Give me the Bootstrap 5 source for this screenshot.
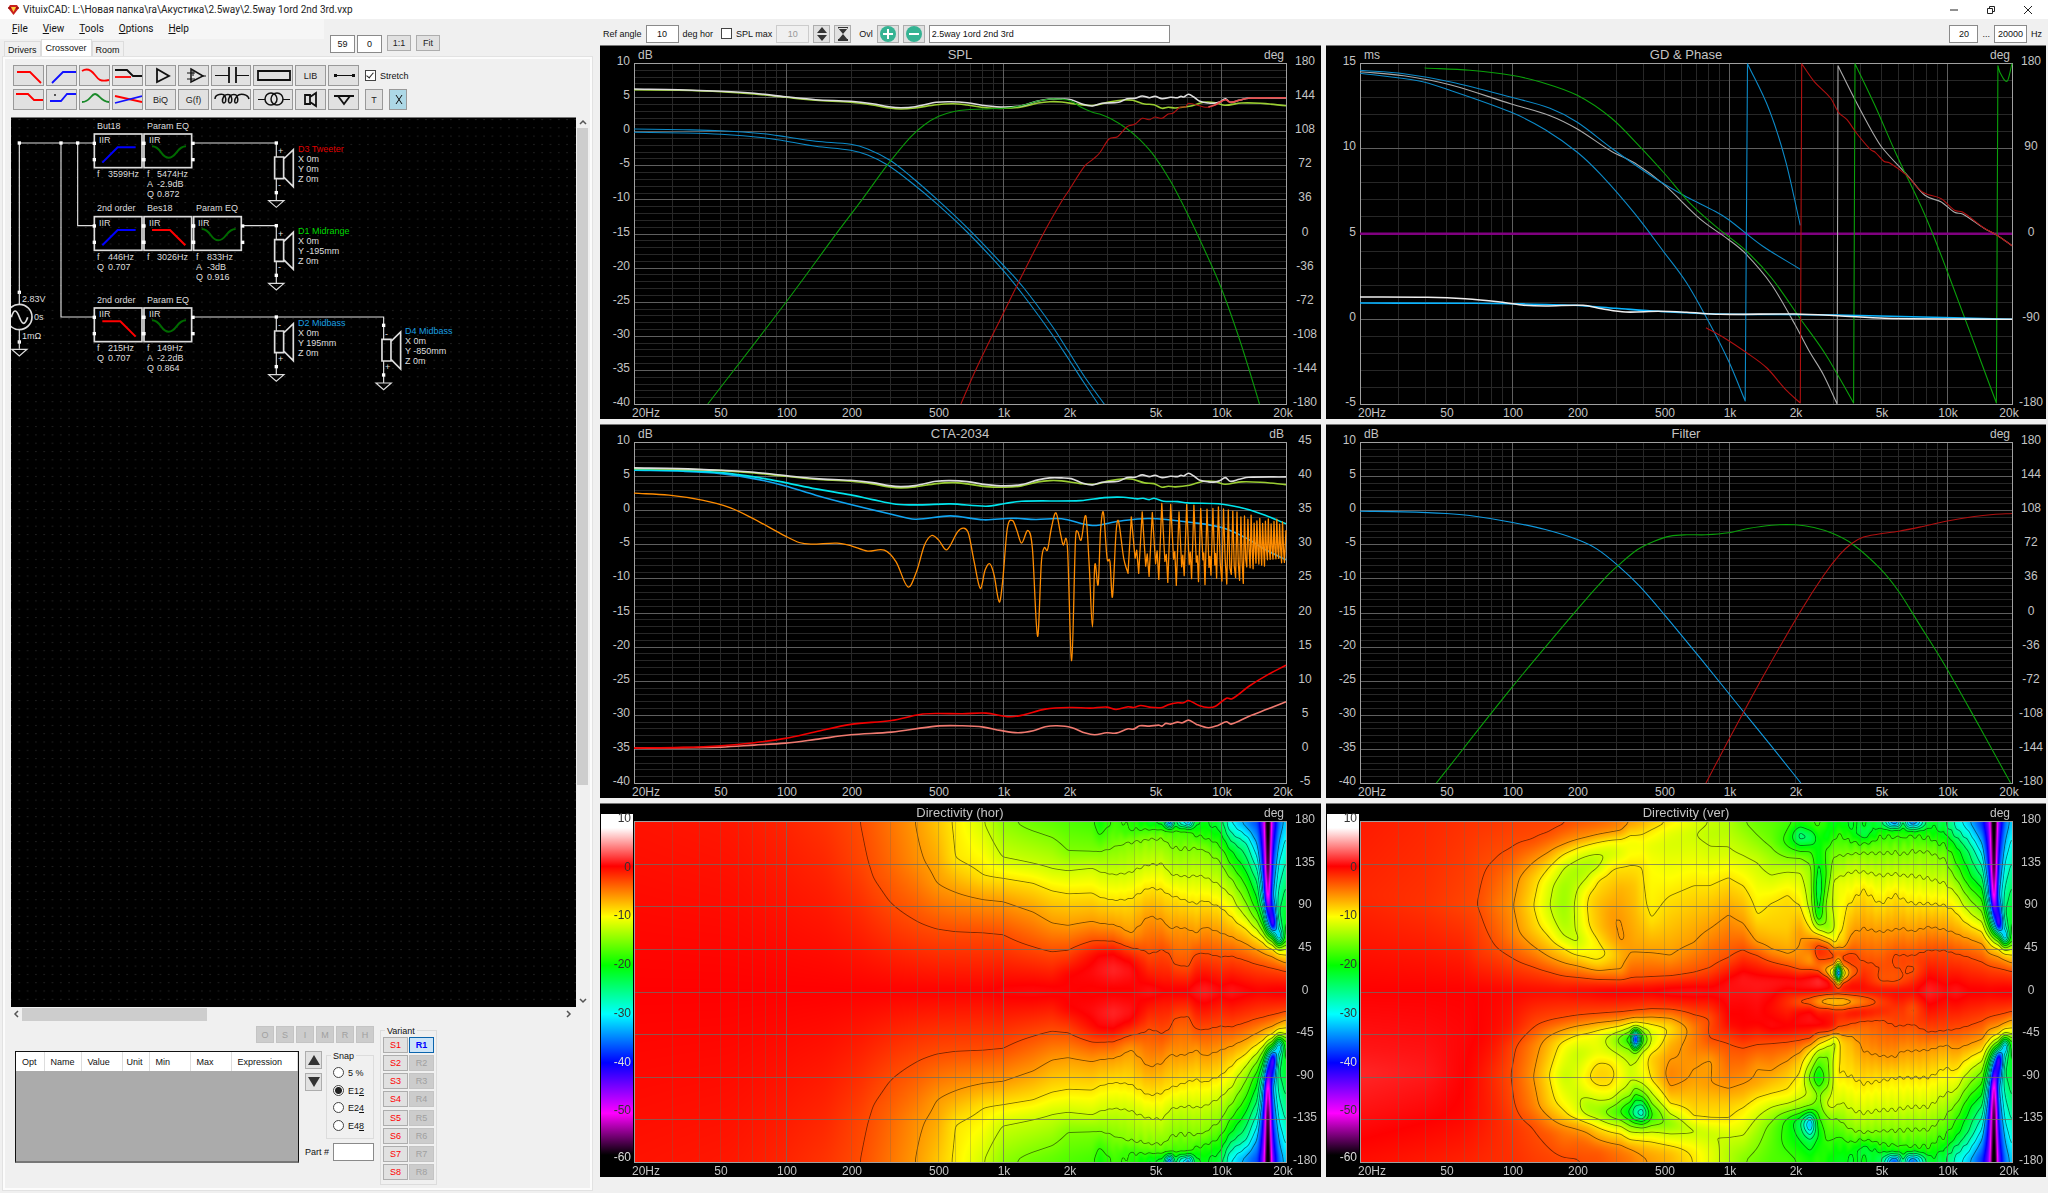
<!DOCTYPE html>
<html lang="en">
<head>
<meta charset="utf-8">
<meta name="viewport" content="width=device-width, initial-scale=1">
<title>VituixCAD</title>
<link href="https://cdn.jsdelivr.net/npm/bootstrap@5.3.0/dist/css/bootstrap.min.css" rel="stylesheet">
<style>
body{font-family:"Liberation Sans",sans-serif;font-size:9px;line-height:12px;color:#111;background:#f0f0f0;height:100vh;min-height:700px;overflow:hidden}
a{color:inherit;text-decoration:none}
main{min-height:0}
.titlebar{height:19px;flex:none;background:#fff;font:10px/14px Roboto,sans-serif;padding:0 2px 0 8px;color:#222}
.titlebar button{border:0;background:none;padding:0;width:37px;display:flex;justify-content:center}
.leftside{flex:0 0 593px;min-width:0;position:relative}
.menus{height:20px;width:324px;background:#f6f6f6;font:10px/20px Roboto,sans-serif;padding-left:12px;gap:15px}
.viewtools{position:absolute;left:330px;top:16px;gap:2px}
.viewtools input{width:25px;height:16px}
.viewtools button{height:16px;margin-left:3px;width:24px}
.tabline{height:18px;padding-left:4px}
.tabline a{border:1px solid #dcdcdc;border-bottom:0;padding:2px 3px 0;height:16px;margin-top:2px}
.tabline a.on{background:#fff;height:18px;margin-top:0;padding:2px 4px 0}
.page{border:2px solid #fcfcfc;outline:1px solid #e2e2e2;margin:0 1px 3px 3px;padding:6px 1px 7px 6px;flex:1;min-height:0}
.fbtn{border:1px solid #adadad;background:#e1e1e1;color:#222;padding:0;font-size:9px;line-height:12px;display:flex;align-items:center;justify-content:center}
.fbtn:disabled{background:#ccc;border-color:#c4c4c4;color:#a0a0a0}
.tools{gap:3px;padding:0 2px}
.tools>div{gap:2px}
.tools .fbtn{width:31px;height:21px;border-color:#999}
.tools .wide{width:40px}.tools .slim{width:18px}
.tools .cyanish{background:#add8e6}
.tools svg{fill:none;stroke:#111;stroke-width:1.8}
input[type=text]{border:1px solid #8a8a8a;background:#fff;padding:0 2px;font-size:9px;height:18px;border-radius:0;color:#111;min-width:0}
input[type=text]:disabled{background:#f0f0f0;border-color:#ccc;color:#999}
.inp-s{width:29px}.inp-m{width:33px}.inp-l{width:41px}.inp-xl{width:241px}
.tick{appearance:none;width:11px;height:11px;border:1px solid #444;background:#fff;margin:0;position:relative;flex:none}
.tick:checked::after{content:"";position:absolute;left:2px;top:0;width:4px;height:7px;border:solid #222;border-width:0 1px 1px 0;rotate:40deg}
.dot{appearance:none;width:11px;height:11px;border:1px solid #444;border-radius:50%;background:#fff;margin:0;flex:none}
.dot:checked{background:radial-gradient(#222 0 3px,#fff 4px)}
.sheet{flex:1;min-height:0;margin-top:7px}
.sheet .board{background:#000;flex:1;min-width:0;border-top:1px solid #777}
.board svg{display:block;width:100%;height:100%}
.vbar{width:13px;padding:1px 1px 1px 1px}
.vbar .thumb{height:74%}
.hbar{height:15px;padding:1px 15px 1px 1px}
.hbar .thumb{width:33%}
.thumb{background:#cdcdcd}
.bottom{padding:0 0 0 4px;height:159px;gap:6px}
.bottomleft{width:359px}
.params{height:112px;background:#ababab;border:1px solid #111;border-bottom:2px solid #777;width:284px}
.params table{width:100%;background:#fff;table-layout:fixed}
.params th{font-weight:400;height:19px;padding:0 6px;border-right:1px solid #ddd;width:41px}
.params th:nth-child(1){width:28px}.params th:nth-child(2){width:37px}.params th:nth-child(4){width:27px;padding:0 4px}.params th:nth-child(7){width:auto}
.arrow{width:17px;height:18px}
.letters{gap:2px}.letters .fbtn{width:18px;height:17px}
.group{border:1px solid #dcdcdc;position:relative;padding:0;margin:0}
.group legend{position:absolute;top:-6px;left:4px;background:#f0f0f0;padding:0 2px;width:auto;margin:0;font-size:9px;line-height:12px}
.snap{width:48px;height:84px;padding:11px 0 6px 6px}
.variant{width:57px;height:155px;padding:6px 2px 4px}
.variant .fbtn{width:25px;height:16px}
.variant .s{color:#f00}
.variant .on{background:#cce4f7;border:1px solid #0a64ad;color:#00f;font-weight:700}
.rightside{flex:1;min-width:0;padding:0 2px 16px 7px}
.topline{height:26px;padding:4px 4px 0 3px;gap:4px}
.topline .fbtn{width:17px;height:18px}
.topline .round{width:22px}
.charts{flex:1;min-height:0;display:grid;grid-template:repeat(3,minmax(0,1fr))/repeat(2,minmax(0,1fr));gap:5px}
.plot{background:#000;position:relative;overflow:hidden;border-top:1px solid #777;min-width:0}
.plot svg,.plot canvas{position:absolute;left:0;top:0}
.plot text{font:12px "Liberation Sans",sans-serif;fill:#c4c4c4}
.plot .ttl{font-size:13px}
.board text{font:9px "Liberation Sans",sans-serif;fill:#ddd}
</style>
<script src="https://cdn.jsdelivr.net/npm/bootstrap@5.3.0/dist/js/bootstrap.bundle.min.js"></script>
</head>
<body class="d-flex flex-column">
<header class="titlebar d-flex align-items-center">
<svg width="11" height="10" viewBox="0 0 11 10" class="me-1"><path d="M2 0h7l2 3-5.500 7L0 3z" fill="#c8201c"/><path d="M3 2h5l-2.500 5z" fill="#ffd23a"/><path d="M0 3h3M8 3h3" stroke="#700"/></svg>
<span class="me-auto">VituixCAD: L:\Новая папка\ra\Акустика\2.5way\2.5way 1ord 2nd 3rd.vxp</span>
<button aria-label="Minimize"><svg width="10" height="10"><path d="M1 5h8" stroke="#222"/></svg></button>
<button aria-label="Restore"><svg width="10" height="10" fill="none" stroke="#222"><path d="M1.500 3.500h5v5h-5zM3.500 3V1.500h5v5H7"/></svg></button>
<button aria-label="Close"><svg width="10" height="10"><path d="M1 1l8 8M9 1l-8 8" stroke="#222"/></svg></button>
</header>
<main class="d-flex flex-grow-1">
<section class="leftside d-flex flex-column">
<nav class="menus d-flex"><a href="#"><u>F</u>ile</a><a href="#"><u>V</u>iew</a><a href="#"><u>T</u>ools</a><a href="#"><u>O</u>ptions</a><a href="#"><u>H</u>elp</a></nav>
<div class="viewtools d-flex"><input type="text" class="text-center" value="59" aria-label="X"><input type="text" class="text-center" value="0" aria-label="Y"><button class="fbtn">1:1</button><button class="fbtn">Fit</button></div>
<nav class="tabline d-flex"><a href="#">Drivers</a><a href="#" class="on">Crossover</a><a href="#">Room</a></nav>
<div class="page d-flex flex-column">
<div class="tools d-flex flex-column">
<div class="d-flex align-items-center">
<button class="fbtn" aria-label="Low pass"><svg width="31" height="21"><path stroke="red" d="M3 7H16L27 18"/></svg></button>
<button class="fbtn" aria-label="High pass"><svg width="31" height="21"><path stroke="#11f" d="M5 18L16 7H29"/></svg></button>
<button class="fbtn" aria-label="Shelf"><svg width="31" height="21"><path stroke="red" d="M2 6C8 2 12 6 15 10S20 17 29 15"/></svg></button>
<button class="fbtn" aria-label="Contour"><svg width="31" height="21"><path stroke="red" d="M2 12H18"/><path d="M2 5H14L20 11H29"/></svg></button>
<button class="fbtn" aria-label="Buffer"><svg width="31" height="21"><path d="M11 4L23 11L11 17Z"/></svg></button>
<button class="fbtn" aria-label="Op-amp"><svg width="31" height="21"><path stroke-width="1.500" d="M12 4L24 11L12 17Z"/><path stroke-width="1" d="M8 8H16M8 14H16M24 11H27M14 6V11"/></svg></button>
<button class="fbtn wide" aria-label="Capacitor"><svg width="40" height="21"><path stroke-width="1" d="M3 10.500H17M24 10.500H37"/><path d="M17 2V18M24 2V18"/></svg></button>
<button class="fbtn wide" aria-label="Resistor"><svg width="40" height="21"><path d="M4 6H36V15H4Z"/></svg></button>
<button class="fbtn">LIB</button>
<button class="fbtn" aria-label="Wire"><svg width="31" height="21"><path stroke-width="1" d="M6 10.500H25"/><path fill="#111" stroke="none" d="M5 9h3v3H5zM23 9h3v3h-3z"/></svg></button>
<label class="d-flex align-items-center gap-1 ms-1"><input type="checkbox" class="tick" checked>Stretch</label>
</div>
<div class="d-flex">
<button class="fbtn" aria-label="Low shelf"><svg width="31" height="21"><path stroke="red" d="M2 5H14L20 11H29"/></svg></button>
<button class="fbtn" aria-label="High shelf"><svg width="31" height="21"><path stroke="#11f" d="M3 12H14L20 5H29"/><circle cx="8" cy="6" r=".6" stroke-width="1"/></svg></button>
<button class="fbtn" aria-label="Peak"><svg width="31" height="21"><path stroke="#1a8a2a" d="M2 13C10 13 11 5 15 5S21 13 29 13"/></svg></button>
<button class="fbtn" aria-label="All pass"><svg width="31" height="21"><path stroke="red" d="M2 7L29 13"/><path stroke="#11f" d="M2 14L29 7"/></svg></button>
<button class="fbtn">BiQ</button><button class="fbtn">G(f)</button>
<button class="fbtn wide" aria-label="Inductor"><svg width="40" height="21"><path stroke-width="1.500" d="M3 10C3 5 11 4 13 7C15 12 13 14 12 14S9 12 12 7C14 5 18 5 19 7C21 12 19 14 18 14S15 12 18 7C20 5 24 5 25 7C27 12 25 14 24 14S21 12 25 7C28 4 36 5 37 10"/></svg></button>
<button class="fbtn wide" aria-label="Transformer"><svg width="40" height="21"><g stroke-width="1.500"><circle cx="17" cy="10" r="6"/><circle cx="23" cy="10" r="6"/></g><path stroke-width="1" d="M4 10.500H11M29 10.500H36"/></svg></button>
<button class="fbtn" aria-label="Speaker"><svg width="31" height="21"><path d="M9 6H14V15H9ZM14 8L20 4V17L14 13"/></svg></button>
<button class="fbtn" aria-label="Ground"><svg width="31" height="21"><path d="M5 7H25M9 7L15 15L21 7"/></svg></button>
<button class="fbtn slim ms-1">T</button><button class="fbtn slim cyanish ms-1" aria-label="Delete"><svg width="18" height="19"><path stroke-width="1" d="M6 5L12 14M12 5L6 14"/></svg></button>
</div>
</div>
<div class="sheet d-flex">
<div class="board" id="board"></div>
<div class="vbar d-flex flex-column"><svg width="11" height="10"><path d="M3 6l3-3 3 3" fill="none" stroke="#555" stroke-width="1.500"/></svg><div class="thumb"></div><svg class="mt-auto" width="11" height="10"><path d="M3 3l3 3 3-3" fill="none" stroke="#555" stroke-width="1.500"/></svg></div>
</div>
<div class="hbar d-flex"><svg width="10" height="13"><path d="M6 3L3 6l3 3" fill="none" stroke="#555" stroke-width="1.500"/></svg><div class="thumb"></div><svg class="ms-auto" width="10" height="13"><path d="M3 3l3 3-3 3" fill="none" stroke="#555" stroke-width="1.500"/></svg></div>
<div class="bottom d-flex">
<div class="bottomleft d-flex flex-column">
<div class="letters d-flex justify-content-end pt-1"><button class="fbtn" disabled>O</button><button class="fbtn" disabled>S</button><button class="fbtn" disabled>I</button><button class="fbtn" disabled>M</button><button class="fbtn" disabled>R</button><button class="fbtn" disabled>H</button></div>
<div class="d-flex pt-1 mt-1">
<div class="params"><table><thead><tr><th>Opt</th><th>Name</th><th>Value</th><th>Unit</th><th>Min</th><th>Max</th><th>Expression</th></tr></thead></table></div>
<div class="d-flex flex-column gap-1 ms-auto"><div class="d-flex gap-1"><div class="d-flex flex-column gap-1"><button class="fbtn arrow" aria-label="Up"><svg width="12" height="10"><path d="M6 0l6 10H0z" fill="#333"/></svg></button><button class="fbtn arrow" aria-label="Down"><svg width="12" height="10"><path d="M6 10l6-10H0z" fill="#333"/></svg></button></div>
<fieldset class="group snap d-flex flex-column justify-content-between mt-1"><legend>Snap</legend>
<label class="d-flex gap-1"><input class="dot" type="radio" name="snap">5 %</label><label class="d-flex gap-1"><input class="dot" type="radio" name="snap" checked><span>E1<u>2</u></span></label><label class="d-flex gap-1"><input class="dot" type="radio" name="snap"><span>E2<u>4</u></span></label><label class="d-flex gap-1"><input class="dot" type="radio" name="snap"><span>E4<u>8</u></span></label></fieldset></div>
<label class="d-flex align-items-center justify-content-between">Part #<input type="text" class="inp-l"></label></div>
</div>
</div>
<fieldset class="group variant d-flex flex-column justify-content-between mt-2" id="variant"><legend>Variant</legend></fieldset>
</div>
</div>
</section>
<section class="rightside d-flex flex-column">
<div class="topline d-flex align-items-center">
<label for="ra">Ref angle</label><input id="ra" type="text" class="text-center inp-m" value="10"><span>deg hor</span>
<label class="d-flex gap-1 ms-1"><input type="checkbox" class="tick">SPL max</label><input type="text" class="text-center inp-m" value="10" disabled aria-label="SPL max value">
<button class="fbtn" aria-label="Step"><svg width="12" height="16"><path d="M6 1l5 6H1zM6 15l5-6H1z" fill="#333"/></svg></button><button class="fbtn" aria-label="Fit range"><svg width="12" height="16"><path d="M6 8l5-6H1zM6 8l5 6H1zM1 1h10v2H1zM1 13h10v2H1z" fill="#333"/></svg></button>
<span class="ms-1">Ovl</span>
<button class="fbtn round" aria-label="Add overlay"><svg width="18" height="16"><circle cx="9" cy="8" r="8" fill="#35b393"/><path d="M4 8h10M9 3v10" stroke="#fff" stroke-width="2"/></svg></button><button class="fbtn round" aria-label="Remove overlay"><svg width="18" height="16"><circle cx="9" cy="8" r="8" fill="#35b393"/><path d="M4 8h10" stroke="#fff" stroke-width="2"/></svg></button>
<input type="text" class="inp-xl" value="2.5way 1ord 2nd 3rd" aria-label="Overlay name">
<div class="d-flex align-items-center gap-1 ms-auto"><input type="text" class="text-center inp-s" value="20" aria-label="From"><span>...</span><input type="text" class="text-center inp-m" value="20000" aria-label="To"><span>Hz</span></div>
</div>
<div class="charts" id="charts"></div>
</section>
</main>
<script>
/* ---------- variant buttons ---------- */
document.getElementById('variant').insertAdjacentHTML('beforeend',[1,2,3,4,5,6,7,8].map(i=>`<div class="d-flex justify-content-between"><button class="fbtn s">S${i}</button><button class="fbtn ${i==1?'on':''}" ${i>1?'disabled':''}>R${i}</button></div>`).join(''));

/* ---------- schematic, shapes in thirds of a pixel ---------- */
(function(){
let s='',t='';
const tx=(x,y,v,c)=>t+=`<text x="${Math.round(x/3)-11}" y="${Math.round(y/3)-8}"${c?` style="fill:${c}"`:''}>${v}</text>`;
const sq=(...p)=>p.forEach(([x,y])=>s+=`<rect x="${x-5}" y="${y-5}" width="10" height="10" fill="#fff" stroke="none"/>`);
const ln=d=>s+=`<path d="${d}"/>`;
const shapes={hp:['blue','M24 86L70 40H124'],lp:['red','M24 40H78L124 86'],eq:['#006a00','M24 37C52 37 50 71 74 71S98 37 126 37']};
function box(x,y,kind,name,rows){
 s+=`<rect x="${x}" y="${y}" width="143" height="101" stroke-width="5"/>`;
 const k=shapes[kind];s+=`<path transform="translate(${x},${y})" d="${k[1]}" stroke="${k[0]}" stroke-width="6"/>`;
 sq([x,y+28],[x,y+77],[x+147,y+28],[x+147,y+77]);
 tx(x+8,y-16,name);tx(x+14,y+28,'IIR');
 rows.forEach((r,i)=>{tx(x+8,y+129+i*30,r[0]);tx(x+40,y+129+i*30,r[1]);});
}
function gnd(x,y){s+=`<path d="M${x-23} ${y}H${x+23}L${x} ${y+20}Z"/>`;}
function spk(x,y,col,name,rows,inv){
 ln(`M${x} ${y}V${y+42}M${x} ${y+107}V${y+173}`);
 s+=`<path stroke-width="5" d="M${x-5} ${y+42}h27v65h-27zM${x+22} ${y+48}L${x+51} ${y+20}V${y+131}L${x+22} ${y+102}"/>`;
 sq([x,y],[x,y+149]);gnd(x,y+173);
 tx(x+5,y+34,inv?'-':'+');tx(x+5,y+134,inv?'+':'-');
 tx(x+64,y+26,name,col);rows.forEach((r,i)=>tx(x+64,y+56+i*30,r));
}
ln('M58 547V99H283');ln('M183 99V621H283');ln('M233 99V347H283');
ln('M580 99H829');ln('M728 347H829');ln('M580 621H1151V646');
sq([58,99],[183,99],[233,99],[58,547],[58,696]);
ln('M58 547V582M58 658V716');gnd(58,718);
s+='<circle cx="58" cy="621" r="38" stroke-width="5"/><path stroke-width="5" d="M34 622C42 594 50 600 58 621S74 650 83 622"/>';
tx(67,575,'2.83V');tx(101,631,'0s');tx(67,686,'1mΩ');
box(283,72,'hp','But18',[['f','3599Hz']]);box(432,72,'eq','Param EQ',[['f','5474Hz'],['A','-2.9dB'],['Q','0.872']]);
box(283,320,'hp','2nd order',[['f','446Hz'],['Q','0.707']]);box(432,320,'lp','Bes18',[['f','3026Hz']]);box(581,320,'eq','Param EQ',[['f','833Hz'],['A','-3dB'],['Q','0.916']]);
box(283,594,'lp','2nd order',[['f','215Hz'],['Q','0.707']]);box(432,594,'eq','Param EQ',[['f','149Hz'],['A','-2.2dB'],['Q','0.864']]);
spk(829,99,'#e00000','D3 Tweeter',['X 0m','Y 0m','Z 0m']);
spk(829,347,'#00d800','D1 Midrange',['X 0m','Y -195mm','Z 0m']);
spk(829,621,'#1a9fe0','D2 Midbass',['X 0m','Y 195mm','Z 0m'],1);
spk(1151,646,'#1a9fe0','D4 Midbass',['X 0m','Y -850mm','Z 0m'],1);
board.innerHTML=`<svg><defs><pattern id="dots" width="25" height="25" patternUnits="userSpaceOnUse" patternTransform="translate(0,1) scale(.332)"><rect x="24" width="3" height="3" fill="#555"/><rect width="1" height="3" fill="#555"/></pattern></defs><rect width="100%" height="100%" fill="url(#dots)"/><g transform="translate(-11,-8) scale(.3333)" fill="none" stroke="#ddd" stroke-width="3.500">${s}</g>${t}</svg>`;
})();

/* ---------- curves: x,y pairs in trace units of the plot frame ---------- */
const P=s=>s.trim().split(/\s+/).map(p=>p.split(',').map(Number));
const L=[96,190,1378,1023],R=[107,190,1383,1023],L2=[96,80,1378,1025],R2=[107,80,1383,1025];
const listen='96,268 190,270 280,275 350,281 416,291 480,300 554,305 600,312 635,321 660,324 690,321 735,308 765,306 800,309 840,318 880,322 915,318 950,304 975,298 1000,298 1020,300 1045,314 1065,319 1085,311 1120,308 1138,297 1155,296 1170,289 1185,294 1197,290 1212,297 1230,293 1245,294 1252,290 1258,292 1268,284 1280,293 1292,305 1310,310 1325,310 1335,306 1346,297 1356,308 1375,302 1395,296 1474,295';
const power='96,270 190,272 280,276 350,283 416,293 480,302 554,308 600,316 635,325 660,328 690,325 735,315 770,312 800,316 840,324 880,326 915,322 950,310 975,306 1000,307 1040,315 1070,317 1100,307 1130,301 1150,302 1175,313 1195,315 1212,326 1225,323 1240,325 1270,320 1300,308 1325,309 1345,317 1380,310 1420,311 1474,318';
const up=s=>P(s).map(p=>[p[0],p[1]-110]);
const comb=(()=>{
 const a=P('96,234 170,240 240,255 300,278 345,308 416,363 445,382 470,387 525,384 555,392 590,408 625,405 650,440 675,516 693,470 710,390 725,361 740,375 757,404 780,350 793,339 803,355 815,440 828,520 838,465 848,446 857,480 868,561 875,500 885,340 896,316 905,345 915,384 929,346 938,400 949,664 957,440 963,398 970,404 978,340 988,293 998,360 1003,389 1012,395 1021,737 1029,380 1033,348 1041,375 1051,303 1058,450 1065,636 1070,450 1077,508 1082,350 1088,292 1096,430 1102,440 1107,546 1115,350 1120,318 1131,430 1140,475');
 const tops=[305,290,292,265,268,290,268,270,280,282,280,275,281,284,288,290,305,302,312,300];
 let x=1147,i=0;
 while(x<1470){const g=Math.max(6,23-(x-1147)*.066);a.push([x,i<20?tops[i]:310+(i*37%22)]);
  a.push([x+g*.35,i<18?430+(i*53%30):400]);if(g>11)a.push([x+g*.5,405+(i*31%20)]);
  a.push([x+g*.68,x<1380?475+(i*47%38):x<1425?444+(i*23%20):430+(i*13%14)]);x+=g;i++;}
 a.push([1474,345]);return a;})();
const freq=[[20,'20Hz'],[50,'50'],[100,'100'],[200,'200'],[500,'500'],[1000,'1k'],[2000,'2k'],[5000,'5k'],[10000,'10k'],[20000,'20k']];
const deg10=[180,144,108,72,36,0,-36,-72,-108,-144,-180],db=[10,5,0,-5,-10,-15,-20,-25,-30,-35,-40];

/* ---------- directivity columns: x : y dB pairs; a column that stops at the axis is mirrored ---------- */
const tail=[
'77 -46 200 -40 300 -32 370 -22 410 -15 440 -9 475 -6 510 -3 590 .2',
'77 -66 220 -62 300 -55 370 -38 410 -22 430 -15 455 -9 480 -6 515 -3 590 .3',
'77 -45 200 -38 300 -33 390 -48 420 -22 440 -15 460 -9 485 -6 518 -3 590 .4',
'77 -36 200 -30 350 -24 400 -28 425 -38 450 -18 475 -9 495 -6 522 -3 590 .5',
'77 -32 150 -29 300 -23 400 -20 440 -18 460 -12 480 -9 505 -6 527 -3 590 .5'];
const hor={96:'77 -.7 590 0',300:'77 -.9 590 0',416:'77 -1.400 590 0',500:'77 -2 590 0',575:'77 -3 200 -2.700 590 0',600:'77 -3.600 245 -3 590 0',635:'77 -4.500 200 -4 318 -3 590 0',690:'77 -6 200 -5.500 375 -3 590 0',735:'77 -7.700 262 -6 400 -3 590 0',775:'77 -9.300 190 -9 290 -6 408 -3 590 0',835:'77 -12 241 -9 312 -6 411 -3 590 0',876:'77 -14.500 187 -12 248 -9 318 -6 417 -3 590 .3',940:'77 -16 105 -15 205 -12 262 -9 350 -6 455 -3 590 .5',980:'77 -16.500 125 -15 220 -12 285 -9 384 -6 470 -3 590 .4',1014:'77 -17 168 -15 225 -12 294 -9 392 -6 466 -3 540 0 590 .1',1065:'77 -17.600 170 -15 216 -12 292 -9 380 -6 438 -3 480 -.5 530 .5 590 -.2',
1080:'77 -20 120 -18 167 -15 228 -12 305 -9 386 -6 438 -3 478 0 525 .9 590 -.2',1110:'77 -17.800 155 -15 238 -12 315 -9 390 -6 440 -3 475 0 525 1.600 590 -.3',1145:'77 -18.500 110 -18 135 -15 232 -12 310 -9 418 -6 458 -3 500 0 530 .8 590 -.2',1185:'77 -22 100 -18 126 -15 208 -12 276 -9 361 -6 478 -3 540 -1 590 .8',1215:'77 -24 98 -18 128 -15 205 -12 284 -9 375 -6 462 -3 550 -1 590 .3',1228:'77 -50 98 -18 145 -15 235 -12 298 -9 402 -6 470 -3.200 550 -1 590 .2',1240:'77 -26 98 -18 158 -15 240 -12 302 -9 395 -6 512 -3 590 .4',1268:'77 -45 98 -18 160 -15 245 -12 318 -9 400 -6 518 -3 590 .4',1285:'77 -22 120 -18 155 -15 240 -12 325 -9 415 -6 475 -3 590 1',1303:'77 -21 128 -18 160 -15 245 -12 315 -9 395 -6 475 -3 590 1.400',1336:'77 -23 150 -18 195 -15 270 -12 335 -9 413 -6 485 -3 590 .5',1360:'77 -31 165 -21 210 -18 250 -15 300 -12 365 -9 425 -6 482 -3 590 1',1390:'77 -35 150 -26 210 -22 270 -18 320 -15 365 -12 400 -9 445 -6 495 -3 590 .5',1415:'77 -38 150 -33 250 -25 330 -20 380 -15 405 -12 430 -9 465 -6 507 -3 590 .2',1427:tail[0],1437:tail[1],1447:tail[2],1460:tail[3],1474:tail[4]};
const ver={107:'77 -1 300 -1.500 590 0 760 .8 840 1.500 950 .7 1104 -.5',250:'77 -1.500 330 -2 590 0 700 .4 840 1 960 .2 1104 -1',330:'77 -1.900 330 -2.700 590 0 720 .2 840 0 960 -.2 1104 -1.300',358:'77 -2 200 -2.700 330 -3 480 -2 590 0 720 0 840 -.6 960 -.7 1104 -1.500',
395:'77 -2.100 190 -3 330 -4.500 455 -3 590 -.1 700 -.4 840 -1.800 960 -1.400 1104 -1.700',
428:'77 -2.300 160 -3 250 -5 330 -5.700 420 -5 487 -3 590 -.2 700 -1 760 -2.500 840 -3 920 -2.700 1000 -2 1104 -1.800',
475:'77 -2.500 135 -3 200 -6 250 -8 330 -9 400 -8 455 -6 515 -3 590 -.3 700 -3 750 -5 850 -6 940 -5 1000 -3 1104 -2.300',
508:'77 -2.600 115 -3 170 -6 215 -9 270 -11.300 330 -12 370 -11.300 425 -9 487 -6 530 -3 590 -.3 680 -3 740 -7 840 -9 930 -8 970 -6 1020 -3.500 1104 -2.500',
540:'77 -2.900 92 -3 148 -6 173 -9 213 -12 270 -14 330 -14.300 390 -13.500 430 -12 460 -9 505 -6 543 -3 590 -.3 672 -3 705 -6 750 -10 850 -12.500 930 -10 970 -8 1010 -5 1104 -2.700',
568:'77 -3 135 -6 155 -9 190 -12 230 -13.800 285 -12 330 -11.200 400 -11.800 430 -12.600 455 -12 482 -9 512 -6 547 -3 590 0 665 -3 695 -6 730 -10 780 -12.500 850 -11 900 -12 960 -11 990 -7 1040 -4 1104 -2.800',
590:'77 -3.300 128 -6 145 -9 178 -12 205 -13.500 248 -12 295 -9 330 -8.700 385 -9 440 -10.600 493 -9 521 -6 550 -3 590 0 662 -3 690 -6 725 -10 775 -11.800 810 -10 850 -9 880 -10 910 -12 935 -14 970 -12 1000 -7 1050 -4 1104 -3',
610:'77 -3.500 120 -6 138 -9 172 -12 195 -13 222 -12 250 -9 330 -7.500 400 -7.800 430 -9 470 -10 502 -9 528 -6 553 -3 590 .3 660 -3 685 -6 720 -10.500 775 -10.800 800 -9 840 -8 880 -9 920 -12 950 -14 975 -12 1010 -8 1070 -3.500 1104 -3',
640:'77 -4.200 113 -6 130 -9 165 -12 185 -11.500 217 -9 330 -6.500 350 -6 390 -6 430 -6.600 480 -8.800 525 -6 555 -3 590 .5 656 -3 682 -6 705 -10 735 -13.500 775 -11.500 805 -9 840 -8.300 880 -9 920 -12 955 -17 985 -13 1010 -9.500 1065 -4.600 1104 -3.600',
660:'77 -4.800 108 -6 128 -9 165 -11.300 190 -10.500 213 -9 280 -7 370 -6 430 -5.800 480 -7 528 -6 555 -3 590 .5 655 -3 678 -6 700 -10 735 -17 770 -13 805 -10.800 840 -10 880 -11 920 -15 955 -19 985 -14 1010 -10 1065 -5 1104 -4',
680:'77 -5.500 105 -8 140 -10.500 180 -10 208 -9 270 -7.500 420 -6.300 480 -6 552 -3 590 .5 652 -3 672 -6 700 -12 735 -21 770 -14 810 -12 860 -11.800 900 -14 955 -23 990 -16 1020 -11 1070 -5.500 1104 -4.500',
691:'77 -6 105 -8 140 -10.500 180 -10 208 -9 270 -7.800 350 -7.300 440 -6.500 475 -6 550 -3 590 .5 650 -3 670 -6 700 -13 735 -50 770 -15 810 -11.500 860 -11.500 900 -18 960 -28 990 -17 1020 -11 1070 -6 1104 -5',
705:'77 -6.500 105 -8.500 150 -10.500 212 -9 330 -8.500 420 -7 475 -6 550 -3 590 .5 648 -3 670 -6 700 -12 735 -21 770 -12 810 -10 860 -11 900 -16 960 -31 990 -18 1020 -11 1070 -6.500 1104 -5.500',
725:'77 -7.500 100 -9 150 -11 220 -10 330 -9.500 370 -9 420 -7.500 475 -6 548 -3 590 .5 645 -3 675 -7 705 -11 740 -12 790 -8 860 -9 920 -14 960 -19 990 -16 1020 -11 1070 -7 1104 -6',
765:'77 -9 110 -11 150 -11.500 250 -10 300 -9 400 -7.500 485 -6 545 -3 590 1 640 -2.500 680 -7 705 -9 750 -7 840 -5 880 -6 930 -9 990 -15 1020 -12 1075 -7.500 1104 -7',
815:'77 -11 115 -12 180 -11 270 -9 400 -6.700 445 -6 535 -3 590 1 660 -3 700 -5 760 -5 800 -5.800 860 -6.300 930 -8 970 -9 1010 -12.500 1070 -9.500 1104 -9',
850:'77 -12 112 -12.700 180 -11.500 270 -9 400 -6 520 -3 590 .7 670 -3 715 -2.700 735 -3 800 -6.200 870 -6 930 -8 975 -9 1020 -12.300 1075 -11 1104 -11',
889:'77 -13 100 -13 180 -11.500 245 -9 358 -6 490 -3 560 .5 590 .6 690 -.3 745 -3 850 -5 885 -6 930 -8 975 -9 1028 -12 1075 -13 1104 -13',
920:'77 -15 110 -14 180 -12 270 -9 385 -6 465 -3 550 1 650 0 700 0 760 -3 850 -5.400 900 -7 940 -9 1000 -11 1035 -12.400 1075 -14 1104 -15',
950:'77 -16 120 -15 200 -12 300 -10 360 -9 440 -6.200 480 -3 560 1 690 0 750 -3 820 -6 870 -6.500 910 -9 970 -12 1020 -14 1104 -16',
980:'77 -16.500 130 -16 180 -14 240 -12 320 -9 400 -8 465 -6 500 -3 560 1 640 -.5 700 .5 745 -3 830 -6 900 -9 940 -12 1000 -16 1104 -17',
1014:'77 -17 100 -18 140 -19 185 -15 228 -12 305 -8.700 400 -8 450 -7 480 -6 512 -3 560 1 620 -2 700 .3 742 -3 820 -7 900 -9.500 940 -13 980 -19 1040 -19 1104 -17',
1041:'77 -18 120 -26 150 -21 185 -15 230 -12 330 -9 415 -6 450 -6 500 -5 525 -3 560 1 590 0 622 -4 650 0 690 .5 738 -3 800 -8 900 -11 940 -14 985 -24 1040 -21 1104 -18',
1062:'77 -18 100 -20 125 -25 165 -18 220 -14 330 -13 400 -9 450 -4 500 -6.500 530 -2 560 1.500 590 0 622 -5 645 0 680 1 735 -3 770 -9 850 -16 900 -12 940 -15 990 -36 1040 -23 1104 -19',
1080:'77 -17 130 -20 200 -21 280 -24 360 -21 400 -13 440 -4 470 -1 520 -5 555 2.500 590 0 605 -3 622 -8 640 -2 690 1 720 -4 780 -14 850 -22 900 -15 950 -17 1020 -21 1104 -18',
1100:'77 -19 120 -21 165 -17 240 -17 330 -13 400 -15 430 -9 460 -2 500 -3 533 -9 555 1 590 0 622 -9.500 645 -1 700 0 740 -10 780 -15 860 -16 930 -11 970 -15 1050 -18 1104 -20',
1114:'77 -22 140 -17 180 -15 270 -11 400 -12 440 -10 480 -2 510 -5 535 -18 560 -3 590 0 622 -9.800 650 -1 700 -1 740 -13 800 -11 930 -11 975 -15 1050 -19 1104 -21',
1122:'77 -20 140 -17 180 -15 270 -11 400 -10 445 -8 480 -2 510 -14 535 -55 560 -10 590 0 622 -9.500 650 -1 700 -3 740 -10 840 -9 930 -12 975 -15 1050 -19 1104 -21',
1131:'77 -21 140 -17 180 -15 270 -10.500 400 -9 445 -8 485 -2 510 -4 535 -15 560 -3 590 0 622 -9.500 650 -1 700 -3 740 -8 840 -9 930 -12 990 -15 1050 -19 1104 -21',
1150:'77 -22 110 -20 150 -17 200 -13 300 -9.500 400 -6.500 440 -5 490 -2 515 -3 535 -5 560 -1 590 0 622 -8 650 0 700 -4 740 -7 850 -9 950 -12 1010 -15 1060 -19 1104 -22',
1175:'77 -20 110 -24 150 -17 170 -15 230 -12 280 -9 400 -6 500 -3 545 -1.500 590 0 622 -6 650 0 690 -4 770 -6 870 -9 960 -12 1020 -15 1070 -23 1104 -20',
1212:'77 -24 100 -20 150 -16 240 -12 325 -9 410 -6 510 -3 560 -3.400 590 0 622 -3 650 -1 672 -3 760 -5 860 -9 950 -12 1015 -15 1060 -19 1104 -24',
1243:'77 -48 98 -20 150 -16 235 -12 295 -9 405 -6 485 -2.700 560 -3.500 590 0 640 -2 690 -2.800 790 -6 850 -9 950 -12 1030 -16 1080 -20 1104 -48',
1258:'77 -26 98 -20 155 -16 240 -12 310 -9 400 -6 490 -2.600 555 -3.200 590 0 640 -2 690 -2.800 770 -6 850 -9 945 -12 1030 -16 1080 -20 1104 -26',
1280:'77 -44 105 -19 155 -15.500 240 -12 325 -9 410 -6 490 -2.600 530 -3.400 590 0 640 -3.400 680 -2.600 770 -6 850 -9 940 -12 1030 -16 1075 -19 1104 -44',
1315:'77 -22 130 -18 165 -15 250 -12 325 -9 395 -6 465 -3 590 1.500 715 -3 765 -6 850 -9 940 -12 1010 -15 1060 -18 1104 -22',
1350:'77 -24 150 -18 190 -15 265 -12 330 -9 405 -6 465 -3 590 .5 712 -3 750 -6 820 -9 900 -12 970 -15 1040 -19 1104 -24',
1372:'77 -29 160 -20 220 -17 290 -12 350 -9 415 -6 475 -3 590 1',1400:'77 -33 170 -24 250 -20 310 -15 350 -12 390 -9 430 -6 485 -3 590 .3',1428:'77 -39 200 -28 290 -20 350 -15 380 -12 410 -9 445 -6 500 -3 590 .3',1442:tail[0],1453:tail[1],1463:tail[2],1476:tail[3],1490:tail[4]};
const stops=[[12,255,255,255],[10,255,255,255],[0,255,0,0],[-10,255,255,0],[-20,0,255,0],[-30,0,255,255],[-40,0,0,255],[-50,255,0,255],[-60,0,0,0],[-99,0,0,0]];
function colour(v){for(let i=1;i<stops.length;i++)if(v>=stops[i][0]){const a=stops[i-1],b=stops[i],k=Math.max(0,(v-b[0])/(a[0]-b[0]));return[1,2,3].map(j=>b[j]+(a[j]-b[j])*k)}return[0,0,0]}
function sample(c,y){for(let i=2;i<c.length;i+=2)if(y<=c[i])return c[i-1]+(c[i+1]-c[i-1])*(y-c[i-2])/(c[i]-c[i-2]);return c[c.length-1]}
function blur(f,w,h,rx,ry,limit){const g=new Float32Array(w*h);
 for(let y=0;y<h;y++)for(let x=0;x<w;x++){const r=x<limit?rx*4:rx;let s=0,n=0;for(let k=-r;k<=r;k++){const q=x+k;if(q>=0&&q<w){s+=f[y*w+q];n++}}g[y*w+x]=s/n}
 const o=new Float32Array(w*h);for(let y=0;y<h;y++)for(let x=0;x<w;x++){let s=0,n=0;for(let k=-ry;k<=ry;k++){const q=y+k;if(q>=0&&q<h){s+=g[q*w+x];n++}}o[y*w+x]=s/n}return o}
function heat(cv,data,w,h,x0,span,rough){
 cv.width=w;cv.height=h;const ctx=cv.getContext('2d'),im=ctx.createImageData(w,h);
 const xs=Object.keys(data).map(Number),cols=xs.map(k=>{let c=data[k].split(' ').map(Number);
  if(c[c.length-2]<=595){const m=[];for(let i=c.length-4;i>=0;i-=2)m.push(1181-c[i],c[i+1]);c=c.concat(m)}return c});
 const tab=cols.map(c=>Array.from({length:h},(_,y)=>sample(c,77+1027*y/(h-1))));
 let f=new Float32Array(w*h);
 for(let x=0;x<w;x++){const q=x0+span*x/(w-1);let i=0;while(i<xs.length-2&&q>xs[i+1])i++;const k=(q-xs[i])/(xs[i+1]-xs[i]);
  const n=Math.min(1,Math.max(0,(q-1060)/100))*Math.min(1,Math.max(0,(1430-q)/80));
  for(let y=0;y<h;y++){const v=tab[i][y]*(1-k)+tab[i+1][y]*k,a=Math.abs(y/(h-1)-.5)*2;
   f[y*w+x]=v+n*rough*a*(Math.sin(q*.37)+Math.sin(q*.83+a*9)*.7+(a>.85?Math.sin(q*.3)*Math.sin(a*60)*3:0))*.5}}
 const lim=w*(650-x0)/span;
 f=blur(blur(f,w,h,1,4,lim),w,h,1,3,lim);
 for(let y=0;y<h;y++)for(let x=0;x<w;x++){const p=y*w+x,v=f[p],c=colour(v);
  const gx=f[x<w-1?p+1:p]-f[x>0?p-1:p],gy=f[y<h-1?p+w:p]-f[y>0?p-w:p],g=Math.hypot(gx,gy)/2+1e-4,l=Math.round(v/3)*3;
  let d=0;if(l<0&&l>-34)d=Math.max(0,1-Math.abs(v-l)/g/.9)*.5;
  for(let j=0;j<3;j++)im.data[p*4+j]=c[j]*(1-d);im.data[p*4+3]=255}
 ctx.putImageData(im,0,0)}

const W='#ddd',B='#0c8ac8';
const charts=[
{t:'SPL',u:['dB','deg'],f:L,y:db,r:deg10,c:[[power,'#9acd32',2],['96,388 200,390 280,393 370,402 416,411 480,425 554,434 590,448 637,482 680,529 735,597 800,684 876,796 920,865 980,980 1014,1055 1050,1135 1090,1213',B,1],['96,398 200,400 280,404 370,414 416,424 480,440 554,452 590,466 632,496 680,546 735,611 800,697 876,812 920,889 980,1005 1014,1077 1045,1145 1077,1213',B,1],[listen,W,2],['252,1213 416,910 530,690 580,596 632,495 680,413 710,375 740,350 770,336 800,330 850,327 890,324 920,316 950,304 975,298 1000,299 1020,304 1040,322 1065,338 1080,343 1105,358 1138,387 1165,420 1195,468 1230,545 1265,640 1300,745 1337,865 1370,995 1395,1105 1418,1213','#0a9a0a',1],['787,1213 820,1105 876,942 910,845 960,705 1000,605 1017,568 1048,500 1065,480 1080,460 1100,418 1118,411 1138,381 1155,373 1170,356 1185,360 1197,352 1212,356 1225,343 1235,341 1250,323 1262,321 1268,311 1300,322 1312,322 1325,315 1346,300 1356,308 1375,302 1395,296 1474,294','#b01010',1],['1310,322 1325,315 1346,300 1356,308 1375,302 1395,296 1474,294','#e85050',2]]},
{t:'GD &amp; Phase',u:['ms','deg'],f:R,y:[15,10,5,0,-5],r:[180,90,0,-90,-180],c:[['107,702 1490,702','#800080',3],
['107,216 200,228 300,256 428,313 510,348 568,388 640,455 690,490 752,555 830,660 889,720 925,762 980,855 1030,975 1060,1055 1090,1125 1119,1213|1121,198 1155,295 1195,400 1215,445 1270,530 1305,587 1340,607 1368,638 1385,643 1430,685 1460,708 1490,738','#aaa',1],
['107,212 200,222 300,247 428,293 510,326 568,368 640,445 710,515 752,553 800,592 860,635 889,660 960,738 1041,809',B,1],['107,221 230,243 290,268 428,338 500,390 568,458 620,528 690,642 752,758 800,850 850,975 889,1085 924,1204|929,192 975,330 1010,485 1041,677',B,1],
['244,205 340,212 428,227 490,247 568,287 640,355 700,440 752,520 810,615 870,690 925,752 980,835 1041,957 1095,1065 1154,1210|1157,192 1200,320 1245,465 1305,645 1350,805 1420,1070 1457,1210|1460,198 1465,220 1480,244 1490,192','#0aa00a',1],
['841,984 880,1015 925,1057 970,1105 1010,1170 1041,1210|1044,192 1070,245 1105,295 1122,338 1140,360 1160,400 1190,450 1200,458 1218,485 1230,489 1265,525 1300,577 1340,597 1368,632 1385,637 1430,684 1460,708 1490,738','#b01010',1],
['107,910 350,911 430,912 560,917 650,926 740,935 870,943 1120,946 1490,959','#0ab4ff',2],['107,892 250,893 330,897 400,906 450,916 500,919 580,917 620,927 670,937 740,935 800,938 870,944 1030,943 1120,948 1220,956 1490,959','#eee',2]]},
{t:'CTA-2034',u:['dB','dB'],f:L2,y:db,r:[45,40,35,30,25,20,15,10,5,0,-5],c:[['96,165 200,168 280,175 360,193 416,212 480,240 554,268 640,297 690,312 765,302 835,314 895,309 945,313 1000,311 1065,331 1120,318 1185,310 1280,323 1340,338 1390,369 1430,403 1474,434','#10a4f0',2],['96,163 200,166 280,172 360,187 416,202 480,221 554,239 600,253 650,267 700,269 765,266 840,273 880,265 915,258 1040,256 1090,247 1130,246 1160,251 1172,249 1185,253 1195,249 1215,258 1245,259 1265,263 1340,267 1390,281 1430,300 1474,326','#00e5ee',2],[up(power),'#9acd32',2],[up(listen),W,2],
[comb,'#ff8c00',2],['96,1000 280,997 350,991 416,985 480,974 554,960 640,952 735,934 790,933 835,937 870,947 907,954 940,948 965,936 990,933 1020,938 1050,955 1070,960 1095,954 1115,955 1140,942 1152,943 1165,933 1185,934 1205,931 1212,934 1220,926 1230,928 1245,922 1255,924 1268,916 1285,929 1310,939 1330,932 1348,921 1358,928 1395,905 1435,883 1474,861','#f07a70',2],['96,1000 200,998 280,993 350,984 416,971 480,951 554,929 640,917 700,899 735,896 790,897 840,895 890,906 920,900 965,883 1020,878 1060,880 1095,877 1115,884 1140,876 1152,878 1167,872 1185,877 1212,878 1225,870 1245,864 1258,864 1268,857 1290,872 1310,878 1325,874 1348,850 1360,852 1395,815 1435,780 1474,751','#f00000',2]]},
{t:'Filter',u:['dB','deg'],f:R2,y:db,r:deg10,c:[['107,288 200,290 290,295 340,301 428,321 500,343 568,373 610,402 655,452 700,513 752,598 830,732 920,890 980,995 1042,1105','#109ae0',1],['269,1105 428,820 568,583 630,484 655,451 695,404 730,379 765,363 800,359 840,359 889,353 930,340 980,330 1030,329 1070,337 1110,355 1150,385 1210,460 1250,530 1290,620 1350,757 1420,933 1487,1105','#0aa00a',1],['841,1105 889,975 960,790 1041,590 1090,482 1125,418 1150,385 1175,366 1205,357 1250,348 1300,334 1350,318 1410,304 1450,298 1490,295','#b01010',1]]},
{t:'Directivity (hor)',u:['','deg'],heat:hor,f:[96,76,1378,1028],r:[180,135,90,45,0,-45,-90,-135,-180],rough:.5},
{t:'Directivity (ver)',u:['','deg'],heat:ver,f:[107,76,1383,1028],r:[180,135,90,45,0,-45,-90,-135,-180],rough:.9}];

/* Catmull-Rom spline through the points */
function spline(p){let d='M'+p[0];for(let i=0;i<p.length-1;i++){const a=p[i-1]||p[i],b=p[i],c=p[i+1],e=p[i+2]||c,k=(c[0]-b[0]);
 const m1=(c[1]-a[1])/((c[0]-a[0])||1),m2=(e[1]-b[1])/((e[0]-b[0])||1);
 d+=`C${b[0]+k/3},${b[1]+m1*k/3} ${c[0]-k/3},${c[1]-m2*k/3} ${c}`}return d}
function draw(){charts.forEach((c,i)=>{
 const el=c.el,w=el.clientWidth,h=el.clientHeight,x0=34,x1=w-35,y0=17,y1=h-15,pw=x1-x0,ph=y1-y0;
 const X=f=>Math.round(x0+pw*Math.log10(f/20)/3)+.5;let s='';
 const ln=(a,b,d,e,col)=>s+=`<path d="M${a} ${b}L${d} ${e}" stroke="${col}"/>`;
 const hm=!!c.heat,minor=hm?'rgba(110,110,90,.3)':'#272727',major=hm?'rgba(110,110,100,.75)':'#5f5f5f';
 if(!hm){const n=(c.y.length-1)*5;for(let k=1;k<n;k++){const y=Math.round(y0+ph*k/n)+.5;if(k%5)ln(x0,y,x1,y,minor)}}
 for(let d=10;d<=10000;d*=10)for(let k=1;k<10;k++){const f=d*k;if(f>20&&f<20000&&k>1)ln(X(f),y0,X(f),y1,minor)}
 const ys=hm?c.r:c.y;ys.forEach((v,k)=>{const y=Math.round(y0+ph*k/(ys.length-1))+.5;ln(x0,y,x1,y,major)});
 [100,1000,10000].forEach(f=>ln(X(f),y0,X(f),y1,major));
 s+=`<rect x="${x0+.5}" y="${y0+.5}" width="${pw}" height="${ph}" stroke="#a0a0a0"/>`;
 (c.c||[]).forEach(([d,col,sw])=>{const F=c.f,m=p=>[+(x0+(p[0]-F[0])/F[2]*pw).toFixed(1),+(y0+(p[1]-F[1])/F[3]*ph).toFixed(1)];
  const segs=typeof d==='string'?d.split('|').map(P):[d];
  const path=segs.map(q=>q===comb?spline(q.filter(p=>p[0]<1145).map(m))+'L'+q.filter(p=>p[0]>=1145).map(m).join('L'):spline(q.map(m))).join('').replace(/(?!^)M/g,'L');
  s+=`<path d="${path}" stroke="${col}" stroke-width="${sw==1?1.1:sw==2?(d===comb?1.3:1.6):2.4}" stroke-linejoin="round"/>`});
 const T=(x,y,v,a,k)=>s+=`<text x="${x}" y="${y}" text-anchor="${a}" stroke="none"${k||''}>${v}</text>`;
 if(hm){s+=`<rect x="1" y="10" width="32" height="${y1-10}" fill="url(#bar${i})" stroke="none"/>`;
  for(let v=10;v>=-60;v-=10)T(31,Math.round(14+(ph)*(10-v)/70)+4-(v==-60?2:0),v,'end',` style="fill:${v==-40||v==-60?'#ddd':'#333'}"`)}
 else c.y.forEach((v,k)=>T(30,Math.round(y0+ph*k/(c.y.length-1))+2,v,'end'));
 c.r.forEach((v,k)=>T(w-16,Math.round(y0+ph*k/(c.r.length-1))+2,v,'middle'));
 freq.forEach(([f,v])=>T(Math.round(X(f))+(f==20?11:f==20000?-4:0),h-2,v,'middle'));
 T(38,13,c.u[0],'start');T(x1-2,13,c.u[1],'end');T(Math.round(x0+pw/2),13,c.t,'middle',' class="ttl"');
 el.querySelector('svg').outerHTML=`<svg width="${w}" height="${h}" fill="none" role="img"><defs><linearGradient id="bar${i}" x2="0" y2="1"><stop stop-color="#fff"/><stop offset=".04" stop-color="#fff"/><stop offset=".15" stop-color="#f00"/><stop offset=".295" stop-color="#ff0"/><stop offset=".435" stop-color="#0f0"/><stop offset=".575" stop-color="#0ff"/><stop offset=".715" stop-color="#00f"/><stop offset=".86" stop-color="#f0f"/><stop offset=".98" stop-color="#000"/></linearGradient></defs>${s}</svg>`;
 if(hm){const cv=el.querySelector('canvas');cv.style.left=x0+'px';cv.style.top=y0+'px';heat(cv,c.heat,pw,ph,c.f[0],c.f[2],c.rough)}
})}
const host=document.getElementById('charts');
charts.forEach(c=>{c.el=document.createElement('div');c.el.className='plot';c.el.innerHTML=(c.heat?'<canvas></canvas>':'')+'<svg></svg>';host.append(c.el)});
draw();addEventListener('resize',draw);
</script>
</body>
</html>
